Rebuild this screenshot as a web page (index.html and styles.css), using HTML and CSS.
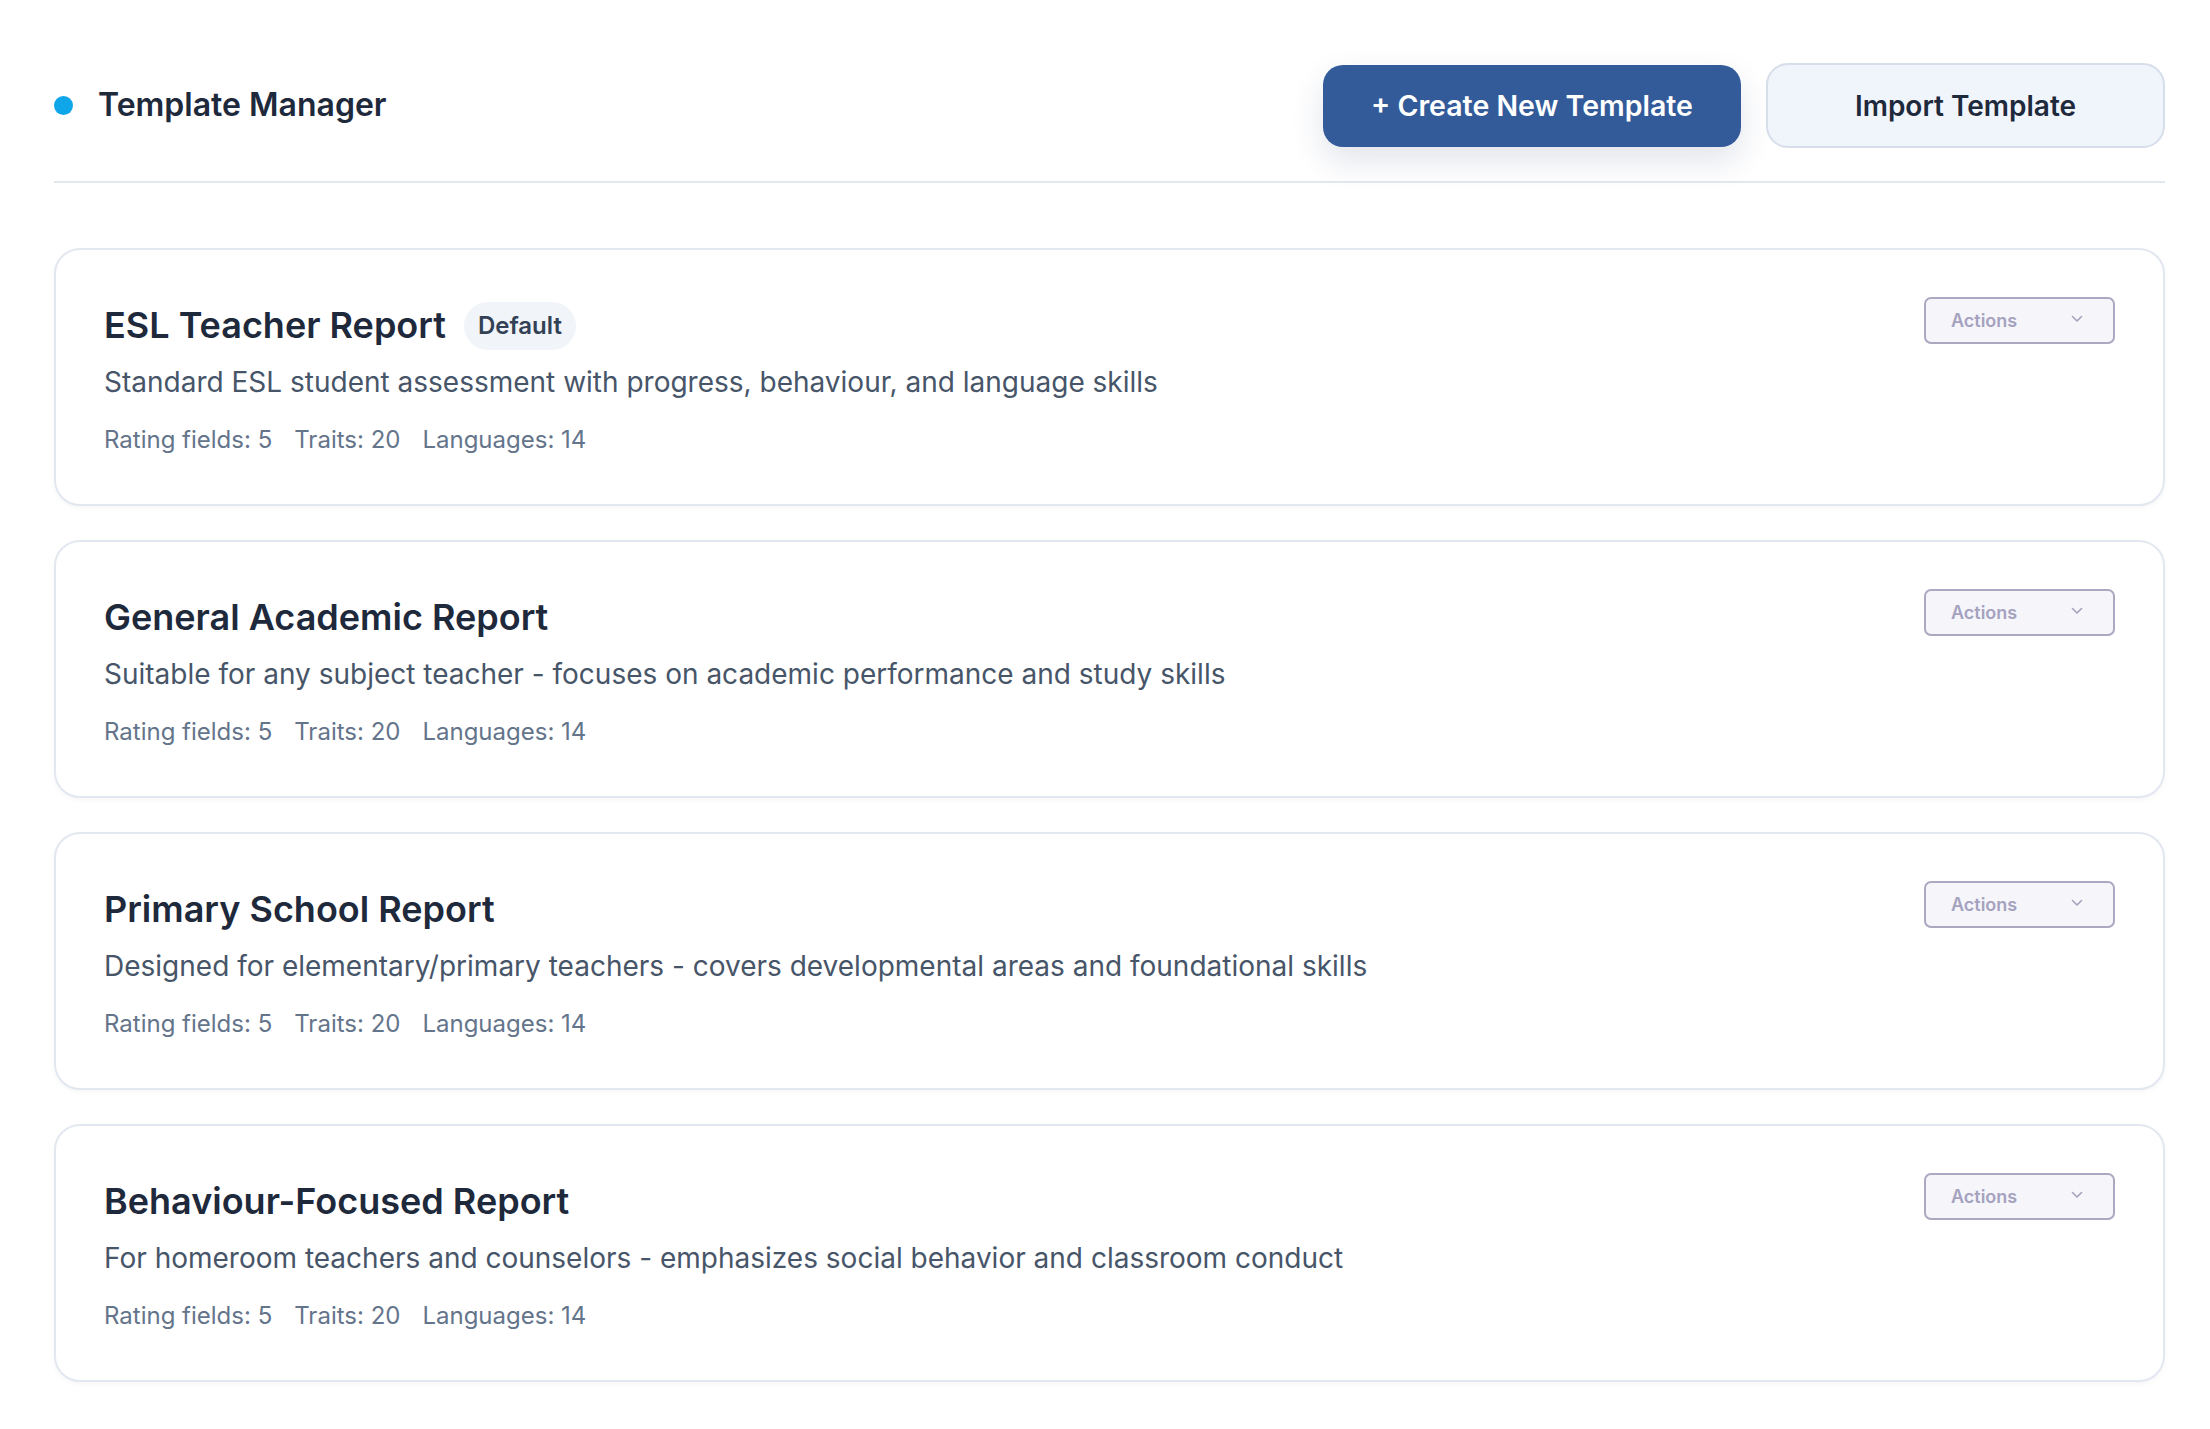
FILE: index.html
```html
<!DOCTYPE html>
<html lang="en">
<head>
<meta charset="utf-8">
<title>Template Manager</title>
<link rel="stylesheet" href="styles.css">
</head>
<body>
<div class="page">
  <header class="header">
    <div class="brand">
      <span class="dot"></span>
      <h1 class="brand-title">Template Manager</h1>
    </div>
    <div class="header-actions">
      <button class="btn btn-primary">+ Create New Template</button>
      <button class="btn btn-secondary">Import Template</button>
    </div>
  </header>

  <main class="cards">
    <section class="card">
      <div class="card-body">
        <div class="title-row">
          <h2 class="card-title">ESL Teacher Report</h2>
          <span class="badge">Default</span>
        </div>
        <p class="card-desc">Standard ESL student assessment with progress, behaviour, and language skills</p>
        <div class="meta"><span>Rating fields: 5</span><span>Traits: 20</span><span>Languages: 14</span></div>
      </div>
      <button class="actions">Actions<svg class="chev" viewBox="0 0 12 8" width="12" height="8"><path d="M1.5 1.5 L6 6 L10.5 1.5" fill="none" stroke="currentColor" stroke-width="1.6" stroke-linecap="round" stroke-linejoin="round"/></svg></button>
    </section>

    <section class="card">
      <div class="card-body">
        <div class="title-row">
          <h2 class="card-title">General Academic Report</h2>
        </div>
        <p class="card-desc">Suitable for any subject teacher - focuses on academic performance and study skills</p>
        <div class="meta"><span>Rating fields: 5</span><span>Traits: 20</span><span>Languages: 14</span></div>
      </div>
      <button class="actions">Actions<svg class="chev" viewBox="0 0 12 8" width="12" height="8"><path d="M1.5 1.5 L6 6 L10.5 1.5" fill="none" stroke="currentColor" stroke-width="1.6" stroke-linecap="round" stroke-linejoin="round"/></svg></button>
    </section>

    <section class="card">
      <div class="card-body">
        <div class="title-row">
          <h2 class="card-title">Primary School Report</h2>
        </div>
        <p class="card-desc">Designed for elementary/primary teachers - covers developmental areas and foundational skills</p>
        <div class="meta"><span>Rating fields: 5</span><span>Traits: 20</span><span>Languages: 14</span></div>
      </div>
      <button class="actions">Actions<svg class="chev" viewBox="0 0 12 8" width="12" height="8"><path d="M1.5 1.5 L6 6 L10.5 1.5" fill="none" stroke="currentColor" stroke-width="1.6" stroke-linecap="round" stroke-linejoin="round"/></svg></button>
    </section>

    <section class="card">
      <div class="card-body">
        <div class="title-row">
          <h2 class="card-title">Behaviour-Focused Report</h2>
        </div>
        <p class="card-desc">For homeroom teachers and counselors - emphasizes social behavior and classroom conduct</p>
        <div class="meta"><span>Rating fields: 5</span><span>Traits: 20</span><span>Languages: 14</span></div>
      </div>
      <button class="actions">Actions<svg class="chev" viewBox="0 0 12 8" width="12" height="8"><path d="M1.5 1.5 L6 6 L10.5 1.5" fill="none" stroke="currentColor" stroke-width="1.6" stroke-linecap="round" stroke-linejoin="round"/></svg></button>
    </section>
  </main>
</div>
</body>
</html>
```

FILE: styles.css
```css
* { box-sizing: border-box; }
html, body { margin: 0; padding: 0; background: #ffffff; }
body { font-family: Inter, "Noto Sans", "Liberation Sans", sans-serif; color: #1e293b; }

.page { padding: 0 45px 40px 54px; }

.header {
  display: flex;
  align-items: center;
  justify-content: space-between;
  padding-top: 63px;
  padding-bottom: 33px;
  border-bottom: 2px solid #e2e8f0;
}
.brand { display: flex; align-items: center; gap: 25px; }
.dot { width: 19px; height: 19px; border-radius: 50%; background: #0ea5e9; flex: none; }
.brand-title { margin: 0; font-size: 32px; font-weight: 600; color: #1e293b; line-height: 1.2; }

.header-actions { display: flex; align-items: center; gap: 25px; }
.btn {
  font-family: inherit;
  font-size: 28px;
  font-weight: 600;
  border-radius: 20px;
  cursor: pointer;
}
.btn-primary {
  width: 418px; height: 82px;
  background: #335b9a;
  color: #ffffff;
  border: none;
  font-size: 28.5px;
  box-shadow: 0 14px 32px rgba(30, 50, 90, 0.13);
}
.btn-secondary {
  width: 399px; height: 85px;
  background: #f0f4fb;
  color: #1e293b;
  border: 2px solid #d6deea;
  border-radius: 22px;
}

.cards { display: flex; flex-direction: column; gap: 34px; margin-top: 65px; }
.card {
  display: flex;
  align-items: flex-start;
  justify-content: space-between;
  border: 2px solid #e3e8f0;
  border-radius: 26px;
  padding: 47px 48px 48px 48px;
  background: #ffffff;
  box-shadow: 0 2px 5px rgba(15, 23, 42, 0.04);
}
.card-body { flex: 1; min-width: 0; }
.title-row { display: flex; align-items: center; gap: 18px; height: 57px; }
.card-title { margin: 0; font-size: 36px; font-weight: 600; color: #1e293b; line-height: 1.2; }
.badge {
  display: inline-flex; align-items: center;
  height: 48px; padding: 0 14px;
  border-radius: 24px;
  background: #f1f4f9;
  color: #334155;
  font-size: 24px; font-weight: 600;
}
.card-desc { margin: 8px 0 0; font-size: 28px; line-height: 40px; color: #475569; }
.meta { display: flex; gap: 22px; margin-top: 22px; font-size: 24px; line-height: 32px; color: #64748b; }

.actions {
  flex: none;
  display: flex; align-items: center; justify-content: space-between;
  width: 191px; height: 47px;
  padding: 0 30px 0 25px;
  border: 2px solid #aca8c2;
  border-radius: 7px;
  background: #f5f5fa;
  color: #a5a2bf;
  font-family: inherit;
  font-size: 18px; font-weight: 600;
  cursor: pointer;
}
.chev { display: block; margin-top: -3px; }
```
